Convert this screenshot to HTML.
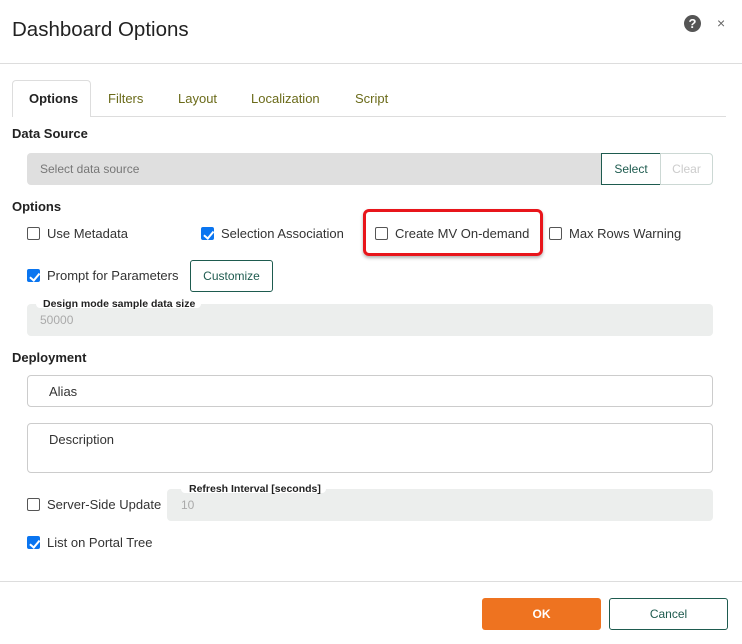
<!DOCTYPE html>
<html><head><style>
*{box-sizing:border-box;margin:0;padding:0}
body{width:742px;height:644px;background:#fff;font-family:"Liberation Sans",sans-serif;position:relative;overflow:hidden;color:#333}
.a{position:absolute}
.t{font-size:13px;line-height:16px;white-space:nowrap}
.b{font-weight:bold;color:#222}
.cb{position:absolute;width:13px;height:13px;border:1px solid #555;border-radius:2px;background:#fff}
.cb.on{background:#0a75f0;border-color:#0a75f0}
.cb.on::after{content:"";position:absolute;left:3.5px;top:0.5px;width:3.5px;height:7.5px;border:solid #fff;border-width:0 2px 2px 0;transform:rotate(40deg)}
.tab{position:absolute;top:91px;font-size:13px;color:#6b6b1a}
</style></head><body>
<div class="a" style="left:12px;top:18px;font-size:20.5px;color:#222">Dashboard Options</div>
<div class="a" style="left:684px;top:15px;width:17px;height:17px;border-radius:50%;background:#555;color:#fff;font-size:13px;font-weight:bold;text-align:center;line-height:17px">?</div>
<div class="a" style="left:717px;top:15px;font-size:14px;color:#666">×</div>
<div class="a" style="left:0;top:63px;width:742px;height:1px;background:#ddd"></div>

<div class="a" style="left:12px;top:116px;width:714px;height:1px;background:#ddd"></div>
<div class="a" style="left:12px;top:80px;width:79px;height:37px;border:1px solid #ddd;border-bottom:none;border-radius:4px 4px 0 0;background:#fff"></div>
<div class="tab" style="left:29px;color:#222;font-weight:bold">Options</div>
<div class="tab" style="left:108px">Filters</div>
<div class="tab" style="left:178px">Layout</div>
<div class="tab" style="left:251px">Localization</div>
<div class="tab" style="left:355px">Script</div>

<div class="a t b" style="left:12px;top:126px">Data Source</div>
<div class="a" style="left:27px;top:153px;width:575px;height:32px;background:#dfdfdf;border-radius:4px 0 0 4px"></div>
<div class="a t" style="left:40px;top:161px;color:#777;font-size:12px">Select data source</div>
<div class="a t" style="left:601px;top:153px;width:60px;height:32px;border:1px solid #1e5b4f;color:#1e5b4f;font-size:12px;text-align:center;line-height:30px">Select</div>
<div class="a t" style="left:660px;top:153px;width:53px;height:32px;border:1px solid #ccd8d4;border-radius:0 4px 4px 0;color:#ccc;font-size:12px;text-align:center;line-height:30px">Clear</div>

<div class="a t b" style="left:12px;top:199px">Options</div>
<div class="cb" style="left:27px;top:227px"></div><div class="a t" style="left:47px;top:226px">Use Metadata</div>
<div class="cb on" style="left:201px;top:227px"></div><div class="a t" style="left:221px;top:226px">Selection Association</div>
<div class="a" style="left:363px;top:209px;width:180px;height:47px;border:3px solid #e8151b;border-radius:6px;box-shadow:0 2px 3px rgba(0,0,0,.3)"></div>
<div class="cb" style="left:375px;top:227px"></div><div class="a t" style="left:395px;top:226px">Create MV On-demand</div>
<div class="cb" style="left:549px;top:227px"></div><div class="a t" style="left:569px;top:226px">Max Rows Warning</div>

<div class="cb on" style="left:27px;top:269px"></div><div class="a t" style="left:47px;top:268px">Prompt for Parameters</div>
<div class="a t" style="left:190px;top:260px;width:83px;height:32px;border:1px solid #1e5b4f;border-radius:3px;color:#1e5b4f;font-size:12px;text-align:center;line-height:30px">Customize</div>

<div class="a" style="left:27px;top:304px;width:686px;height:32px;background:#eceeed;border-radius:4px"></div>
<div class="a" style="left:36px;top:296px;width:165px;height:12px;background:#fff;border-radius:4px"></div>
<div class="a t b" style="left:43px;top:296px;font-size:10.5px">Design mode sample data size</div>
<div class="a t" style="left:40px;top:312px;color:#aaa;font-size:12px">50000</div>

<div class="a t b" style="left:12px;top:350px">Deployment</div>
<div class="a" style="left:27px;top:375px;width:686px;height:32px;border:1px solid #ccc;border-radius:4px"></div>
<div class="a t" style="left:49px;top:384px">Alias</div>
<div class="a" style="left:27px;top:423px;width:686px;height:50px;border:1px solid #ccc;border-radius:4px"></div>
<div class="a t" style="left:49px;top:432px">Description</div>

<div class="cb" style="left:27px;top:498px"></div><div class="a t" style="left:47px;top:497px">Server-Side Update</div>
<div class="a" style="left:167px;top:489px;width:546px;height:32px;background:#eceeed;border-radius:4px"></div>
<div class="a" style="left:181px;top:481px;width:145px;height:12px;background:#fff;border-radius:4px"></div>
<div class="a t b" style="left:189px;top:481px;font-size:10.5px">Refresh Interval [seconds]</div>
<div class="a t" style="left:181px;top:497px;color:#aaa;font-size:12px">10</div>

<div class="cb on" style="left:27px;top:536px"></div><div class="a t" style="left:47px;top:535px">List on Portal Tree</div>

<div class="a" style="left:0;top:581px;width:742px;height:1px;background:#ddd"></div>
<div class="a t" style="left:482px;top:598px;width:119px;height:32px;background:#ee7320;border-radius:3px;color:#fff;font-weight:bold;font-size:12px;text-align:center;line-height:32px">OK</div>
<div class="a t" style="left:609px;top:598px;width:119px;height:32px;border:1px solid #1e5b4f;border-radius:3px;color:#1e5b4f;font-size:12px;text-align:center;line-height:30px">Cancel</div>
</body></html>
